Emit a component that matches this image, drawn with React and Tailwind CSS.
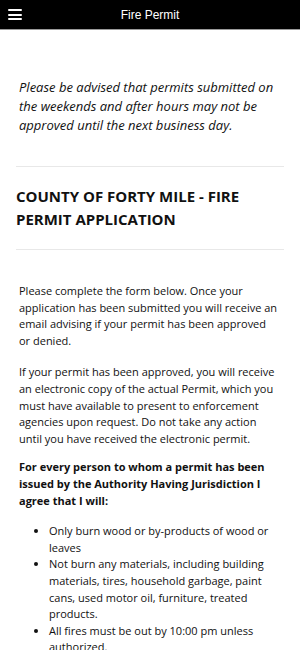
import React from "react";

function Hamburger() {
  return (
    <div className="flex flex-col gap-[2.5px] w-[14px]">
      <span className="block h-[2px] w-full rounded-sm bg-white" />
      <span className="block h-[2px] w-full rounded-sm bg-white" />
      <span className="block h-[2px] w-full rounded-sm bg-white" />
    </div>
  );
}

export default function App() {
  const body = { fontFamily: '"Open Sans", "DejaVu Sans", sans-serif' };
  return (
    <div className="min-h-screen bg-white text-[#111]" style={body}>
      <header className="relative flex h-[30px] items-center justify-center border-b border-[#9a9a9a] bg-black">
        <button className="absolute left-[8px] top-[9px] p-0">
          <Hamburger />
        </button>
        <h1
          className="text-[12px] text-white"
          style={{ fontFamily: '"Liberation Sans", Arial, sans-serif' }}
        >
          Fire Permit
        </h1>
      </header>

      <main className="px-4">
        <p className="mt-[48px] px-[3px] text-[13px] italic leading-[19px]">
          Please be advised that permits submitted on the weekends and after hours may not be approved until the next business day.
        </p>

        <hr className="mt-[31px] border-t border-[#e8e8e8]" />

        <h2 className="mt-[18px] text-[15px] font-bold uppercase leading-[23px]">
          County of Forty Mile - Fire Permit Application
        </h2>

        <hr className="mt-[18px] border-t border-[#e8e8e8]" />

        <div className="mt-[33px] px-[3px] text-[11px] leading-[16.6px]">
          <p className="mb-[15px]">
            Please complete the form below. Once your application has been submitted you will receive an email advising if your permit has been approved or&nbsp;denied.
          </p>
          <p className="mb-[12px]">
            If your permit has been approved, you will receive an electronic copy of the actual Permit, which you must have available to present to enforcement agencies upon request. Do not take any action until you have received the electronic permit.
          </p>
          <p className="mb-[14px] font-bold">
            For every person to whom a permit has been issued by the Authority Having Jurisdiction I agree that I will:
          </p>
          <ul className="list-disc pl-[30px]">
            <li>Only burn wood or by-products of wood or leaves</li>
            <li>Not burn any materials, including building materials, tires, household garbage, paint cans, used motor oil, furniture, treated products.</li>
            <li>All fires must be out by 10:00 pm unless authorized.</li>
          </ul>
        </div>
      </main>
    </div>
  );
}
